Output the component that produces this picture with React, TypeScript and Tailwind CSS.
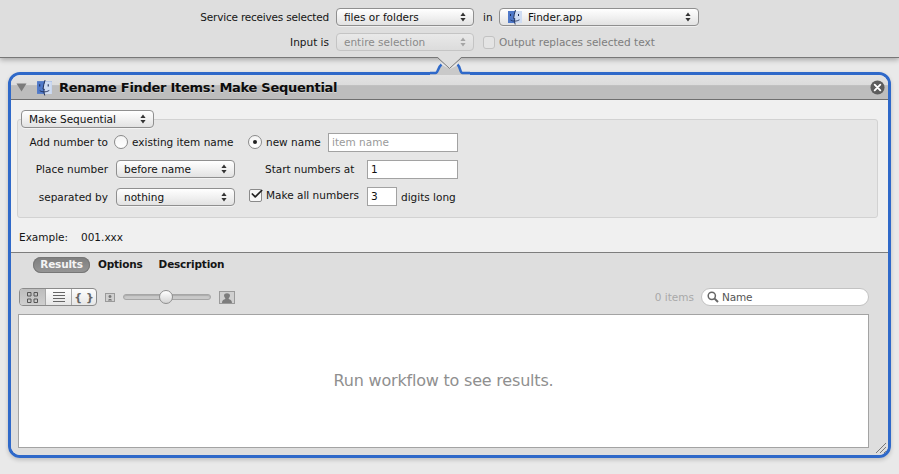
import React from "react";
import { Check } from "lucide-react";

const Arrows = ({ dim }: { dim?: boolean }) => (
  <svg width="6" height="10" viewBox="0 0 6 10" className="shrink-0">
    <path d="M3 0.5 L5.6 4 H0.4 Z M3 9.5 L5.6 6 H0.4 Z" fill={dim ? "#a5a5a5" : "#333"} />
  </svg>
);

const FinderIcon = ({ size = 16 }: { size?: number }) => (
  <svg width={size} height={size} viewBox="0 0 16 16" className="shrink-0">
    <rect x="1" y="2" width="14" height="12" fill="#4f79c9" />
    <path d="M8.5 2 H15 V14 H8 C7.4 11.5 7.4 10.5 7.8 9.5 H6.6 C7 6.5 7.8 4 8.5 2 Z" fill="#cfdcf2" />
    <path d="M8.5 1 C7.6 4 6.9 6.6 6.6 9.5 H7.8 C7.3 11.5 7.6 13.5 8.2 15.5" fill="none" stroke="#1c2c55" strokeWidth="0.9" />
    <path d="M3.5 5 V7 M11.5 5 V7" stroke="#1c2c55" strokeWidth="1" />
    <path d="M3.5 11 C6 12.6 9.5 12.6 12.5 10.8" fill="none" stroke="#1c2c55" strokeWidth="0.8" />
  </svg>
);

function Popup({ label, w, dim, icon }: { label: string; w: string; dim?: boolean; icon?: boolean }) {
  return (
    <div
      className={`flex h-[18px] shrink-0 items-center justify-between rounded-[4px] border pl-[7px] pr-[7px] ${w} ${
        dim
          ? "border-[#c4c4c4] bg-gradient-to-b from-[#e9e9e9] to-[#dcdcdc] text-[#8a8a8a]"
          : "border-[#8f8f8f] bg-gradient-to-b from-[#ffffff] via-[#f1f1f1] to-[#e2e2e2] text-[#111] shadow-[0_1px_0_rgba(255,255,255,0.5)]"
      }`}
    >
      <span className="flex items-center gap-[5px]">
        {icon && <FinderIcon size={16} />}
        {label}
      </span>
      <Arrows dim={dim} />
    </div>
  );
}

const Radio = ({ on }: { on?: boolean }) => (
  <span className="flex h-[14px] w-[14px] shrink-0 items-center justify-center rounded-full border border-[#8a8a8a] bg-gradient-to-b from-[#f4f4f4] to-[#ffffff]">
    {on && <span className="h-[4px] w-[4px] rounded-full bg-[#222]" />}
  </span>
);

const Field = ({ w, value, hint }: { w: string; value: string; hint?: boolean }) => (
  <div
    className={`flex h-[19px] shrink-0 items-center border border-[#a2a2a2] bg-white pl-[3px] ${w} ${
      hint ? "text-[#9a9a9a]" : "text-[#111]"
    }`}
  >
    {value}
  </div>
);

export default function App() {
  return (
    <div className="relative flex h-[474px] w-[899px] flex-col overflow-hidden bg-[#e9e9e9] font-['DejaVu_Sans',sans-serif] text-[10.5px] leading-[15px] text-[#151515]">
      {/* service bar */}
      <header className="z-10 flex h-[58px] shrink-0 flex-col gap-[7px] border-b border-[#777] bg-[#dedede] pt-[8px] shadow-[0_2px_5px_rgba(0,0,0,0.28)]">
        <div className="flex h-[18px] items-center">
          <span className="w-[329px] text-right tracking-[-0.2px]">Service receives selected</span>
          <div className="ml-[7px]">
            <Popup label="files or folders" w="w-[138px]" />
          </div>
          <span className="ml-[9px] w-[16px]">in</span>
          <Popup label="Finder.app" w="w-[200px]" icon />
        </div>
        <div className="flex h-[18px] items-center">
          <span className="w-[329px] text-right">Input is</span>
          <div className="ml-[7px]">
            <Popup label="entire selection" w="w-[138px]" dim />
          </div>
          <span className="ml-[9px] h-[13px] w-[12px] rounded-[3px] border border-[#c2c2c2] bg-[#e4e4e4]" />
          <span className="ml-[4px] text-[#7d7d7d]">Output replaces selected text</span>
        </div>
      </header>

      {/* connector notch between the bar and the action */}
      <svg width="40" height="18" viewBox="0 0 40 18" className="absolute left-[430px] top-[57px] z-20">
        <path d="M0 16.5 H6 C9 16.5 9 10 12 8 L20 12 L28 8 C31 10 31 16.5 34 16.5 H40 V18 H0 Z" fill="#c9c9c9" />
        <path d="M0 16 H5.5 C8 16 8 10 11.5 7.5" fill="none" stroke="#2f69c9" strokeWidth="2.5" />
        <path d="M40 16 H32.5 C30 16 30.5 10 27.5 7.5" fill="none" stroke="#2f69c9" strokeWidth="2.5" />
        <path d="M7.5 0 L19.5 11.5 L31.5 0 Z" fill="#dedede" />
        <path d="M7.5 0.5 L19.5 11.5 L31.5 0.5" fill="none" stroke="#777" strokeWidth="1" />
      </svg>

      <main className="flex-1 px-[8px] pt-[14px]">
        <section className="flex h-[386px] flex-col overflow-hidden rounded-[12px] border-[3px] border-[#2f69c9] shadow-[0_2px_4px_rgba(0,0,0,0.18)]">
          {/* title bar */}
          <div className="flex h-[25px] shrink-0 items-center border-b border-[#6f6f6f] bg-[linear-gradient(#e3e3e3_0,#dcdcdc_42%,#bdbdbd_44%,#bdbdbd_100%)] pl-[5px] pr-[3px]">
            <svg width="11" height="9" viewBox="0 0 11 9" className="shrink-0">
              <path d="M0.5 0.5 H10.5 L5.5 8.5 Z" fill="#7b7b7b" />
            </svg>
            <span className="ml-[9px]">
              <FinderIcon size={17} />
            </span>
            <h1 className="ml-[6px] text-[13px] font-bold tracking-[-0.28px] text-[#0c0c0c] [text-shadow:0_1px_0_rgba(255,255,255,0.35)]">
              Rename Finder Items: Make Sequential
            </h1>
            <svg width="15" height="15" viewBox="0 0 16 16" className="ml-auto shrink-0">
              <circle cx="8" cy="8" r="7.5" fill="#5c5c5c" />
              <path d="M5 5 L11 11 M11 5 L5 11" stroke="#fff" strokeWidth="2" strokeLinecap="round" />
            </svg>
          </div>

          {/* options */}
          <div className="flex h-[153px] shrink-0 flex-col border-b border-[#7d7d7d] bg-[#f0f0f0] pl-[6px] pr-[10px] pt-[10px]">
            <div className="relative z-10 ml-[4px] w-fit">
              <Popup label="Make Sequential" w="w-[133px]" />
            </div>
            <div className="-mt-[9px] h-[99px] rounded-[3px] border border-[#d2d2d2] bg-[#e6e6e6] pl-[3px] pt-[12px]">
              <div className="flex h-[20px] items-center">
                <span className="w-[87px] text-right">Add number to</span>
                <span className="ml-[6px]"><Radio /></span>
                <span className="ml-[4px] w-[116px]">existing item name</span>
                <Radio on />
                <span className="ml-[4px] w-[62px]">new name</span>
                <Field w="w-[130px]" value="item name" hint />
              </div>
              <div className="mt-[7px] flex h-[20px] items-center">
                <span className="w-[87px] text-right">Place number</span>
                <span className="ml-[8px]"><Popup label="before name" w="w-[119px]" /></span>
                <span className="ml-[30px] w-[102px]">Start numbers at</span>
                <Field w="w-[91px]" value="1" />
              </div>
              <div className="mt-[7px] flex h-[20px] items-center">
                <span className="mt-[2px] w-[87px] text-right">separated by</span>
                <span className="ml-[8px] mt-[2px]"><Popup label="nothing" w="w-[119px]" /></span>
                <span className="mb-[2px] ml-[14px] flex h-[13px] w-[13px] shrink-0 items-center justify-center rounded-[2px] border border-[#8a8a8a] bg-[#f7f7f7]">
                  <Check size={14} strokeWidth={3} className="-mt-[3px] ml-[2px] shrink-0 text-[#222]" />
                </span>
                <span className="mb-[2px] ml-[4px] w-[101px]">Make all numbers</span>
                <Field w="w-[30px]" value="3" />
                <span className="ml-[4px] mt-[2px]">digits long</span>
              </div>
            </div>
            <div className="mt-[12px] flex pl-[2px]">
              <span className="w-[62px]">Example:</span>
              <span>001.xxx</span>
            </div>
          </div>

          {/* results */}
          <div className="relative flex min-h-0 flex-1 flex-col bg-[#dedede] pl-[7px] pr-[19px] pt-[3px]">
            <nav className="flex h-[17px] items-center font-bold tracking-[-0.2px]">
              <span className="ml-[15px] flex h-[16px] w-[57px] items-center justify-center rounded-full bg-gradient-to-b from-[#7e7e7e] to-[#969696] text-[#f4f4f4] shadow-[inset_0_0_0_1px_#777]">
                Results
              </span>
              <span className="ml-[8px]">Options</span>
              <span className="ml-[16px]">Description</span>
            </nav>
            <div className="mt-[15px] flex h-[18px] items-center">
              <div className="ml-[1px] flex h-[18px] w-[78px] overflow-hidden rounded-[4px] border border-[#8a8a8a] bg-gradient-to-b from-[#fdfdfd] to-[#e6e6e6] text-[#666]">
                <span className="flex w-[25px] items-center justify-center bg-gradient-to-b from-[#bdbdbd] to-[#cfcfcf]">
                  <svg width="11" height="11" viewBox="0 0 11 11">
                    <path d="M0.5 0.5 H4 V4 H0.5 Z M7 0.5 H10.5 V4 H7 Z M0.5 7 H4 V10.5 H0.5 Z M7 7 H10.5 V10.5 H7 Z" fill="none" stroke="#555" />
                  </svg>
                </span>
                <span className="flex w-[26px] items-center justify-center border-l border-[#a8a8a8]">
                  <svg width="12" height="11" viewBox="0 0 12 11">
                    <path d="M0 0.5 H12 M0 3.5 H12 M0 6.5 H12 M0 9.5 H12" stroke="#666" />
                  </svg>
                </span>
                <span className="flex flex-1 items-center justify-center border-l border-[#a8a8a8] text-[11px] font-bold leading-none">
                  {"{ }"}
                </span>
              </div>
              <svg width="10" height="9" viewBox="0 0 10 9" className="ml-[8px] shrink-0">
                <rect x="0.5" y="0.5" width="9" height="8" fill="#d0d0d0" stroke="#9a9a9a" />
                <path d="M3 7.5 C3 5.5 7 5.5 7 7.5 Z M5 2 A1.5 1.5 0 1 1 4.99 2 Z" fill="#777" />
              </svg>
              <div className="relative ml-[8px] h-[6px] w-[88px] rounded-full border border-[#a6a6a6] bg-[#c9c9c9] shadow-[inset_0_1px_1px_rgba(0,0,0,0.15)]">
                <span className="absolute left-[35px] top-[-5px] h-[14px] w-[14px] rounded-full border border-[#8f8f8f] bg-gradient-to-b from-[#ffffff] to-[#d4d4d4]" />
              </div>
              <svg width="16" height="13" viewBox="0 0 16 13" className="ml-[8px] shrink-0">
                <rect x="0.5" y="0.5" width="15" height="12" fill="#d0d0d0" stroke="#9a9a9a" />
                <path d="M3 12 C3 8.5 6 8.5 6.5 7.5 C5.5 6.5 5 5.5 5 4.5 C5 1.6 11 1.6 11 4.5 C11 5.5 10.5 6.5 9.5 7.5 C10 8.5 13 8.5 13 12 Z" fill="#7d7d7d" />
              </svg>
              <span className="ml-auto text-[#a9a9a9]">0 items</span>
              <div className="ml-[7px] flex h-[18px] w-[168px] items-center gap-[3px] rounded-full border border-[#c2c2c2] bg-white pl-[5px] tracking-[-0.2px] text-[#555]">
                <svg width="12" height="12" viewBox="0 0 12 12" className="shrink-0">
                  <circle cx="4.8" cy="4.8" r="3.6" fill="none" stroke="#666" strokeWidth="1.5" />
                  <path d="M7.6 7.6 L11 11" stroke="#666" strokeWidth="2" />
                </svg>
                Name
              </div>
            </div>
            <div className="mt-[8px] flex h-[134px] shrink-0 items-center justify-center border border-[#a3a3a3] bg-white text-[16px] leading-[24px] tracking-[-0.2px] text-[#8f8f8f]">
              Run workflow to see results.
            </div>
            {/* resize grip */}
            <svg width="12" height="12" viewBox="0 0 12 12" className="absolute bottom-[1px] right-[1px]">
              <path d="M1 11 L11 1 M5 11 L11 5 M9 11 L11 9" stroke="#777" strokeWidth="1" />
            </svg>
          </div>
        </section>
      </main>
    </div>
  );
}
